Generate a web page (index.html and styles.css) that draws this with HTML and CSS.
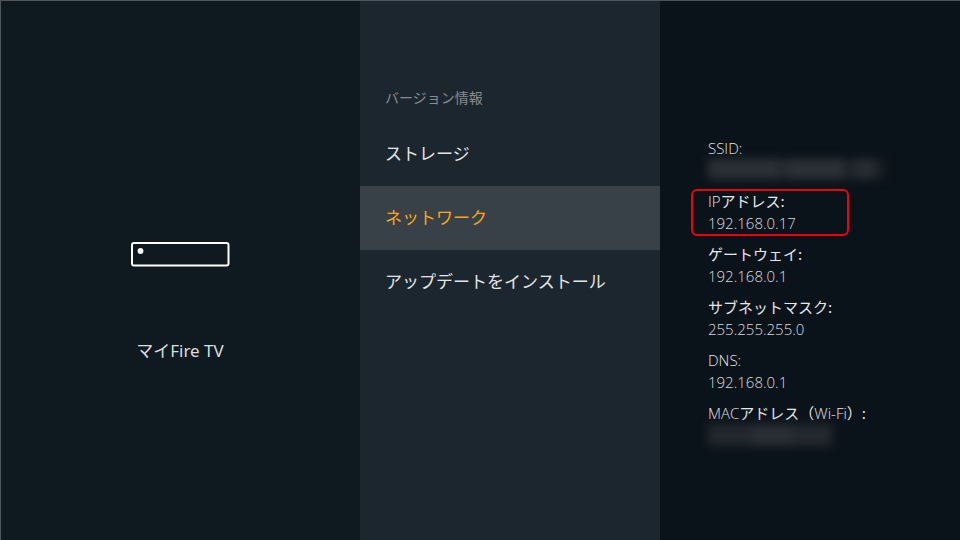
FILE: index.html
```html
<!DOCTYPE html>
<html lang="ja">
<head>
<meta charset="utf-8">
<meta name="viewport" content="width=device-width, initial-scale=1">
<title>マイFire TV</title>
<link rel="stylesheet" href="styles.css">
</head>
<body>
<div class="screen">
  <section class="device">
    <svg class="device-icon" viewBox="0 0 100 26" aria-hidden="true">
      <rect x="2" y="2" width="96.5" height="22.5" rx="2" fill="none" stroke="#fff" stroke-width="2"/>
      <circle cx="10.5" cy="10" r="2.9" fill="#fff"/>
    </svg>
    <h1 class="device-name">マイFire TV</h1>
  </section>
  <nav class="menu">
    <h2 class="menu-title">バージョン情報</h2>
    <button class="menu-item" type="button">ストレージ</button>
    <button class="menu-item selected" type="button">ネットワーク</button>
    <button class="menu-item" type="button">アップデートをインストール</button>
  </nav>
  <section class="details">
    <dl class="info">
      <div class="entry"><dt>SSID:</dt><dd><span class="masked masked-ssid"></span></dd></div>
      <div class="entry highlighted"><dt>IP<span class="kana">アドレス:</span></dt><dd>192.168.0.17</dd></div>
      <div class="entry"><dt><span class="kana">ゲートウェイ:</span></dt><dd>192.168.0.1</dd></div>
      <div class="entry"><dt><span class="kana">サブネットマスク:</span></dt><dd>255.255.255.0</dd></div>
      <div class="entry"><dt>DNS:</dt><dd>192.168.0.1</dd></div>
      <div class="entry"><dt>MAC<span class="kana">アドレス（</span>Wi-Fi<span class="kana">）:</span></dt><dd><span class="masked masked-mac"></span></dd></div>
    </dl>
  </section>
</div>
</body>
</html>
```

FILE: styles.css
```css
*,
*::before,
*::after {
  box-sizing: border-box;
}

body {
  margin: 0;
  background: #0f1920;
  color: #dcdedf;
  font-family: "Noto Sans", "Noto Sans CJK JP", sans-serif;
}

.screen {
  position: relative;
  display: grid;
  grid-template-columns: 6fr 5fr 5fr;
  min-height: 100vh;
}

.screen::after {
  content: "";
  position: absolute;
  inset: 0;
  border-top: 1px solid #4d555b;
  border-left: 1px solid #4d555b;
  pointer-events: none;
}

.device {
  display: flex;
  flex-direction: column;
  align-items: center;
  justify-content: center;
  gap: 72px;
  padding-top: 64px;
}

.device-icon {
  width: 100px;
  height: 26px;
}

.device-name {
  margin: 0;
  font-size: 17px;
  line-height: 24px;
  font-weight: 400;
}

.menu {
  display: flex;
  flex-direction: column;
  padding-top: 86px;
  background: #1c262e;
}

.menu-title {
  margin: 0 0 12px;
  padding: 0 25px;
  color: #868c90;
  font-size: 14px;
  line-height: 24px;
  font-weight: 400;
}

.menu-item {
  height: 64px;
  padding: 0 25px 4px;
  border: 0;
  background: transparent;
  color: #e4e6e6;
  font: inherit;
  font-size: 17px;
  text-align: left;
}

.menu-item.selected {
  background: #394148;
  color: #f9a51a;
}

.details {
  padding: 137px 24px 0 48px;
  background: #0b131a;
}

.info {
  display: grid;
  gap: 9px;
  margin: 0;
  font-family: "Open Sans", "Noto Sans CJK JP", sans-serif;
  font-size: 15px;
  line-height: 22px;
  font-weight: 300;
  color: #e6e8e9;
}

.entry {
  position: relative;
}

.kana {
  font-family: "Noto Sans CJK JP", sans-serif;
  font-weight: 400;
}

dd {
  height: 22px;
  margin: 0;
  color: #dadddf;
}

.highlighted::before {
  content: "";
  position: absolute;
  top: -1px;
  left: -17px;
  width: 158px;
  height: 47px;
  border: 2px solid #f00008;
  border-radius: 6px;
}

.masked {
  display: block;
  filter: blur(5px);
}

.masked-ssid {
  width: 178px;
  height: 20px;
  background: linear-gradient(90deg, #2b3037 0 72px, #20262d 72px 79px, #2c3138 79px 136px, #1b2128 136px 146px, #282d34 146px 168px, #151c23 168px);
}

.masked-mac {
  width: 124px;
  height: 22px;
  background: linear-gradient(90deg, #22282f 0 44px, #292e35 44px 84px, #24292f 84px);
}
```
